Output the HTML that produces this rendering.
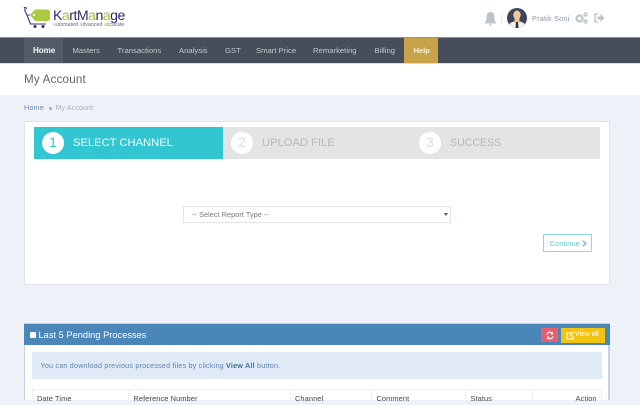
<!DOCTYPE html>
<html><head><meta charset="utf-8"><style>
html,body{margin:0;padding:0}
body{width:640px;height:400px;overflow:hidden;background:#eef1f7;font-family:"Liberation Sans",sans-serif;position:relative}
.a{position:absolute;white-space:nowrap}
.nav{top:37px;height:26px;line-height:27px;font-size:7.700px;color:#c3c9cf}
.th{top:393px;font-size:7.400px;line-height:12px;color:#444;letter-spacing:.1px}
.v{top:389px;width:1px;height:11px;background:#edf0f3}
.st{top:135px;font-size:11.200px;line-height:16px}
.ci{top:132px;width:22px;height:22px;border-radius:50%;background:#fff;font-size:13.500px;line-height:22px;text-align:center}
</style></head><body>
<div class="a" style="left:0;top:0;width:640px;height:37px;background:#fff"></div>
<svg class="a" style="left:23px;top:6px" width="30" height="23" viewBox="0 0 30 23"><path d="M2 2.500 C1 5 3 6.500 4 9 L7.500 18 H23" fill="none" stroke="#3a3478" stroke-width="1.100"/><path d="M1 2 C2 1 3.500 1.500 3.500 3" fill="none" stroke="#3a3478" stroke-width="1.100"/><path d="M7 9 L12 3.500 H24 Q27 3.500 27 6.500 V12 Q27 15 24 15 H12 Z" fill="#a9c940"/><circle cx="11" cy="9" r="1.200" fill="#fff"/><path d="M7 9 H4" stroke="#3a3478" stroke-width=".8"/><circle cx="12" cy="20.500" r="1.500" fill="#2d2a66"/><circle cx="20" cy="20.500" r="1.500" fill="#2d2a66"/></svg>
<div class="a" style="left:53px;top:7.500px;font-size:14.200px;line-height:16px;color:#312c72;letter-spacing:-.55px">K<span style="color:#a4c33b">a</span>rtM<span style="color:#a4c33b">a</span>n<span style="color:#a4c33b">a</span>ge</div>
<div class="a" style="left:53px;top:22px;font-size:5px;line-height:6px;color:#5b5a90;letter-spacing:.15px"><span style="color:#a4c33b">a</span>utomated <span style="color:#a4c33b">a</span>dvanced <span style="color:#a4c33b">a</span>ccurate</div>

<svg class="a" style="left:484px;top:11px" width="13" height="16" viewBox="0 0 13 16"><path d="M6.500 1 C9.500 1 10.500 3.500 10.500 6.500 C10.500 9.500 11.500 11 12.500 12.500 H.5 C1.500 11 2.500 9.500 2.500 6.500 C2.500 3.500 3.500 1 6.500 1Z" fill="#bcc4c8"/><path d="M5 13.500 H8 L7.200 15 H5.800Z" fill="#bcc4c8"/></svg>
<div class="a" style="left:500.500px;top:14px;width:1px;height:10px;background:#e8ebee"></div>
<svg class="a" style="left:507px;top:8px" width="20" height="20" viewBox="0 0 20 20"><defs><clipPath id="c"><circle cx="10" cy="10" r="10"/></clipPath></defs><g clip-path="url(#c)"><rect width="20" height="20" fill="#3e4558"/><path d="M1 20 Q2 14 7 13.500 H13 Q18 14 19 20Z" fill="#eef0f2"/><rect x="7.500" y="9" width="5" height="6" fill="#eec39c"/><ellipse cx="10" cy="7" rx="3.700" ry="4.500" fill="#f3c9a3"/><path d="M9 14 H11 L11.500 20 H8.500Z" fill="#2c3446"/></g></svg>
<div class="a" style="left:532px;top:13px;font-size:7.300px;line-height:11px;color:#8e97ad;letter-spacing:.2px">Pratik Soni</div>
<svg class="a" style="left:575px;top:12px" width="13" height="12" viewBox="0 0 13 12"><circle cx="4.500" cy="6.500" r="3" fill="none" stroke="#bcc4c8" stroke-width="2.200"/><circle cx="10.500" cy="2.500" r="1.500" fill="none" stroke="#bcc4c8" stroke-width="1.400"/><circle cx="10.500" cy="9.500" r="1.500" fill="none" stroke="#bcc4c8" stroke-width="1.400"/></svg>
<svg class="a" style="left:594px;top:13px" width="11" height="10" viewBox="0 0 11 10"><path d="M4 1 H1 V9 H4" fill="none" stroke="#bcc4c8" stroke-width="1.300"/><path d="M3.500 3.500 H6.500 V1 L10.500 5 L6.500 9 V6.500 H3.500Z" fill="#bcc4c8"/></svg>

<div class="a" style="left:0;top:37px;width:640px;height:27px;background:#474e59;border-top:1px solid #8b9096;box-sizing:border-box;border-bottom:1px solid #d9dcdf"></div>
<div class="a" style="left:24px;top:38px;width:39px;height:25px;background:#525b67"></div>
<div class="a" style="left:404px;top:38px;width:34px;height:25px;background:#c9a348"></div>
<div class="a nav" style="left:33px;color:#f4f5f6;font-size:8.200px;font-weight:bold;letter-spacing:-.15px">Home</div>
<div class="a nav" style="left:72.500px">Masters</div>
<div class="a nav" style="left:117.500px">Transactions</div>
<div class="a nav" style="left:179px">Analysis</div>
<div class="a nav" style="left:225px">GST</div>
<div class="a nav" style="left:256px">Smart Price</div>
<div class="a nav" style="left:313px">Remarketing</div>
<div class="a nav" style="left:374.500px">Billing</div>
<div class="a nav" style="left:413.500px;color:#f6f1df;font-weight:bold;font-size:7.500px">Help</div>

<div class="a" style="left:0;top:64px;width:640px;height:31px;background:#fff"></div>
<div class="a" style="left:24px;top:72px;font-size:11.600px;line-height:16px;color:#5f6368;letter-spacing:.2px">My Account</div>
<div class="a" style="left:24px;top:103px;font-size:7.300px;line-height:10px;color:#6f8fb0;letter-spacing:.1px">Home</div>
<div class="a" style="left:49px;top:107px;width:3px;height:3px;border-radius:50%;background:#a3adb8"></div>
<div class="a" style="left:55.500px;top:103px;font-size:7.100px;line-height:10px;color:#a9b0b8;letter-spacing:.1px">My Account</div>

<div class="a" style="left:24px;top:120.500px;width:586px;height:164.500px;background:#fff;border:1px solid #e1e3e8;box-sizing:border-box"></div>
<div class="a" style="left:34px;top:127px;width:566px;height:32px;background:#e4e4e4"></div>
<div class="a" style="left:34px;top:127px;width:189px;height:32px;background:#32c5d2"></div>
<div class="a ci" style="left:42px;color:#32c5d2">1</div>
<div class="a st" style="left:73px;color:#f0fbfc">SELECT CHANNEL</div>
<div class="a ci" style="left:231px;color:#dcdcdc">2</div>
<div class="a st" style="left:262px;color:#b8b8b8">UPLOAD FILE</div>
<div class="a ci" style="left:419px;color:#dcdcdc">3</div>
<div class="a st" style="left:450px;color:#b8b8b8;font-size:10.600px">SUCCESS</div>

<div class="a" style="left:183px;top:205.500px;width:268px;height:17px;background:#fff;border:1px solid #e2e3e6;box-sizing:border-box"></div>
<div class="a" style="left:192px;top:209px;font-size:7.200px;line-height:11px;color:#777;letter-spacing:.1px">-- Select Report Type --</div>
<div class="a" style="left:444px;top:213px;width:0;height:0;border-left:2px solid transparent;border-right:2px solid transparent;border-top:3px solid #555"></div>
<div class="a" style="left:543px;top:234px;width:49px;height:18px;background:#fff;border:1px solid #8fd8df;box-sizing:border-box"></div>
<div class="a" style="left:549.500px;top:237.500px;font-size:7.600px;line-height:11px;color:#6dc8d2">Continue</div>
<svg class="a" style="left:581.500px;top:239.500px" width="5" height="7" viewBox="0 0 5 7"><path d="M1 .8 L3.800 3.500 L1 6.200" fill="none" stroke="#5bb8c4" stroke-width="1.300"/></svg>

<div class="a" style="left:24px;top:323px;width:586px;height:77px;background:#fff;border:1px solid #c3d3e4;border-bottom:0;box-sizing:border-box;border-right-width:2px"></div>
<div class="a" style="left:24px;top:323.500px;width:586px;height:21.500px;background:#4a86b8"></div>
<div class="a" style="left:30px;top:332px;width:6px;height:6px;background:#fff;border-radius:1px"></div>
<div class="a" style="left:38.500px;top:328px;font-size:9.200px;line-height:14px;color:#fff;letter-spacing:.05px">Last 5 Pending Processes</div>
<div class="a" style="left:541px;top:328px;width:17px;height:14px;background:#e7606f"></div>
<svg class="a" style="left:545.500px;top:330.500px" width="8" height="9" viewBox="0 0 8 9"><path d="M1 3.500 A3 3 0 0 1 6.300 2.500 M7 5.500 A3 3 0 0 1 1.700 6.500" fill="none" stroke="#fff" stroke-width="1.200"/><path d="M7 .8 V3.500 H4.500Z M1 8.200 V5.500 H3.500Z" fill="#fff"/></svg>
<div class="a" style="left:560.500px;top:327.500px;width:44px;height:15px;background:#f2c40f"></div>
<svg class="a" style="left:565.500px;top:330.500px" width="9" height="9" viewBox="0 0 9 9"><path d="M6 2 H1 V8 H7 V4.500" fill="none" stroke="#fff" stroke-width="1"/><path d="M3.500 5.500 L8 1" stroke="#fff" stroke-width="1.200"/></svg>
<div class="a" style="left:575px;top:330px;font-size:6.900px;line-height:10px;color:#fff">View all</div>

<div class="a" style="left:32px;top:352px;width:570px;height:26.500px;background:#e0eaf7"></div>
<div class="a" style="left:40.500px;top:360px;font-size:7.200px;line-height:11px;color:#5f85ad;letter-spacing:.2px">You can download previous processed files by clicking <b style="color:#41709e">View All</b> button.</div>

<div class="a" style="left:32px;top:389px;width:570px;height:1px;background:#edf0f3"></div>
<div class="a v" style="left:32px"></div>
<div class="a v" style="left:128px"></div>
<div class="a v" style="left:290px"></div>
<div class="a v" style="left:371px"></div>
<div class="a v" style="left:465px"></div>
<div class="a v" style="left:532px"></div>
<div class="a v" style="left:601px"></div>
<div class="a th" style="left:37px">Date Time</div>
<div class="a th" style="left:133.500px">Reference Number</div>
<div class="a th" style="left:295px">Channel</div>
<div class="a th" style="left:376.500px">Comment</div>
<div class="a th" style="left:470.500px">Status</div>
<div class="a th" style="left:575.500px">Action</div>
</body></html>
